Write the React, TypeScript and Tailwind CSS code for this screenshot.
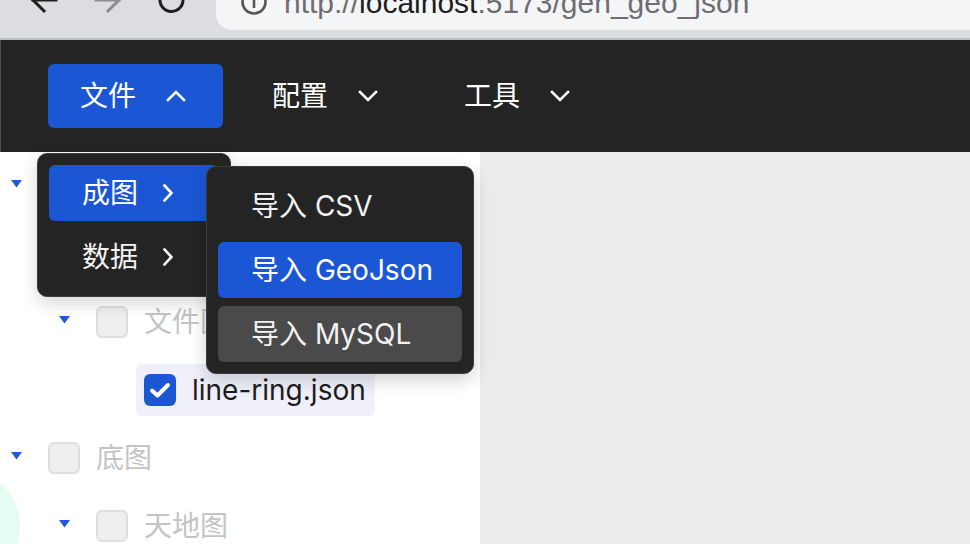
import React from "react";

const FONT = "font-['Inter','Noto_Sans_CJK_SC',sans-serif]";

function Chevron({ dir }: { dir: "up" | "down" | "right" }) {
  if (dir === "right") {
    return (
      <svg width="12" height="20" viewBox="0 0 12 20" fill="none" stroke="currentColor" strokeWidth="2.6" strokeLinecap="square" strokeLinejoin="miter">
        <path d="M2.5 2.5 L9.5 10 L2.5 17.5" />
      </svg>
    );
  }
  return (
    <svg width="20" height="12" viewBox="0 0 20 12" fill="none" stroke="currentColor" strokeWidth="2.6" strokeLinecap="square" strokeLinejoin="miter">
      <path d={dir === "up" ? "M2 10 L10 2 L18 10" : "M2 2 L10 10 L18 2"} />
    </svg>
  );
}

function Tri() {
  return (
    <svg width="11" height="8" viewBox="0 0 11 8" className="-mt-[4px]">
      <polygon points="0,0 11,0 5.5,7.5" fill="#2358d8" />
    </svg>
  );
}

function Checkbox({ checked }: { checked?: boolean }) {
  if (checked) {
    return (
      <div className="flex h-[32px] w-[32px] items-center justify-center rounded-[6px] bg-[#1b57d4]">
        <svg width="32" height="32" viewBox="0 0 32 32" fill="none" stroke="#ffffff" strokeWidth="4" strokeLinecap="round" strokeLinejoin="round">
          <path d="M8 16.5 L13.5 21.5 L24 11" />
        </svg>
      </div>
    );
  }
  return <div className="h-[32px] w-[32px] rounded-[6px] border-2 border-[#dedede] bg-[#efefef]" />;
}

function Row({
  indent,
  switcher,
  checked,
  selected,
  text,
}: {
  indent: string;
  switcher?: boolean;
  checked?: boolean;
  selected?: boolean;
  text: string;
}) {
  return (
    <div className="flex h-[68px] shrink-0 items-center">
      <div className={`${indent} shrink-0`} />
      <div className="flex w-[32px] shrink-0 justify-center">{switcher && <Tri />}</div>
      <div
        className={`ml-[8px] flex h-[52px] items-center gap-[16px] rounded-[6px] pl-[8px] pr-[9px] ${
          selected ? "bg-[#f0f0fb]" : ""
        }`}
      >
        <Checkbox checked={checked} />
        <span className={`whitespace-nowrap text-[28px] leading-none ${selected ? "text-[#1d1d1f]" : "text-[#c4c4c4]"}`}>
          {text}
        </span>
      </div>
    </div>
  );
}

function HeaderButton({ label, active }: { label: string; active?: boolean }) {
  return (
    <div
      className={`flex h-[64px] w-[175px] items-center rounded-[6px] pl-[32px] text-white ${
        active ? "bg-[#1b57d4]" : ""
      }`}
    >
      <span className="w-[56px] text-[28px] leading-none">{label}</span>
      <span className="ml-[30px] flex items-center">
        <Chevron dir={active ? "up" : "down"} />
      </span>
    </div>
  );
}

export default function App() {
  return (
    <div className={`relative h-[544px] w-[970px] overflow-hidden bg-white ${FONT}`}>
      {/* browser chrome */}
      <div className="flex h-[40px] items-start border-b-2 border-[#bcbdc1] bg-[#dcdde1]">
        <div className="ml-[30px] -mt-[14px] flex w-[186px] items-start">
          <svg width="28" height="28" viewBox="0 0 28 28" fill="none" stroke="#1f1f1f" strokeWidth="3" strokeLinecap="square">
            <path d="M3 14 H26" />
            <path d="M14 3 L3 14 L14 25" />
          </svg>
          <svg width="28" height="28" viewBox="0 0 28 28" fill="none" stroke="#8d8d8f" strokeWidth="3" strokeLinecap="square" className="ml-[36px]">
            <path d="M2 14 H25" />
            <path d="M14 3 L25 14 L14 25" />
          </svg>
          <svg width="28" height="28" viewBox="0 0 28 28" fill="none" stroke="#1f1f1f" strokeWidth="3" className="ml-[36px]">
            <path d="M25 14 A11.5 11.5 0 1 1 21 5.3" />
          </svg>
        </div>
        <div className="flex h-[30px] flex-1 items-start rounded-bl-[16px] bg-[#f4f5f7]">
          <svg width="28" height="28" viewBox="0 0 28 28" fill="none" stroke="#555558" strokeWidth="2.6" className="ml-[24px] -mt-[12px]">
            <circle cx="14" cy="14" r="11.5" />
            <path d="M14 12 V20" />
          </svg>
          <span className="ml-[16px] -mt-[12px] whitespace-nowrap font-['Liberation_Sans',sans-serif] text-[30px] leading-[30px] text-[#6e6e72]">
            http://<span className="text-[#1f1f1f]">localhost</span>:5173/gen_geo_json
          </span>
        </div>
      </div>

      {/* header */}
      <div className="flex h-[112px] items-center gap-[17px] border-l border-[#505050] bg-[#242424] pl-[47px]">
        <HeaderButton label="文件" active />
        <HeaderButton label="配置" />
        <HeaderButton label="工具" />
      </div>

      {/* body */}
      <div className="flex h-[392px]">
        <div className="flex w-[480px] flex-col overflow-hidden bg-white">
          <Row indent="w-0" switcher text="图层" />
          <Row indent="w-[48px]" switcher text="成图" />
          <Row indent="w-[48px]" switcher text="文件图层" />
          <Row indent="w-[96px]" checked selected text="line-ring.json" />
          <Row indent="w-0" switcher text="底图" />
          <Row indent="w-[48px]" switcher text="天地图" />
        </div>
        <div className="flex-1 bg-[#ececec]" />
      </div>

      {/* floating mint circle */}
      <div className="absolute left-[-88px] top-[471px] flex h-[108px] w-[108px] items-center justify-end rounded-full bg-[#e5fcf3] pr-[84px]">
        <span className="text-[26px] leading-none text-[#a8a8a8]">0</span>
      </div>

      {/* dropdown level 1 */}
      <div className="absolute left-[37px] top-[153px] flex w-[194px] flex-col gap-[8px] rounded-[10px] border border-[#3c3c3c] bg-[#242424] p-[11px] shadow-[0_6px_18px_rgba(0,0,0,0.16)]">
        <div className="flex h-[56px] items-center rounded-[6px] bg-[#1b57d4] pl-[33px] text-white">
          <span className="w-[56px] text-[28px] leading-none">成图</span>
          <span className="ml-[24px] flex items-center">
            <Chevron dir="right" />
          </span>
        </div>
        <div className="flex h-[56px] items-center rounded-[6px] pl-[33px] text-[#f2f2f2]">
          <span className="w-[56px] text-[28px] leading-none">数据</span>
          <span className="ml-[24px] flex items-center">
            <Chevron dir="right" />
          </span>
        </div>
      </div>

      {/* dropdown level 2 */}
      <div className="absolute left-[206px] top-[166px] flex w-[268px] flex-col gap-[8px] rounded-[10px] border border-[#3c3c3c] bg-[#242424] p-[11px] shadow-[0_6px_18px_rgba(0,0,0,0.18)]">
        <div className="flex h-[56px] items-center rounded-[6px] pl-[33px] text-[28px] leading-none text-[#f2f2f2]">
          <span className="whitespace-nowrap">导入 CSV</span>
        </div>
        <div className="flex h-[56px] items-center rounded-[6px] bg-[#1b57d4] pl-[33px] text-[28px] leading-none text-white">
          <span className="whitespace-nowrap">导入 GeoJson</span>
        </div>
        <div className="flex h-[56px] items-center rounded-[6px] bg-[#4a4a4a] pl-[33px] text-[28px] leading-none text-[#f2f2f2]">
          <span className="whitespace-nowrap">导入 MySQL</span>
        </div>
      </div>
    </div>
  );
}
